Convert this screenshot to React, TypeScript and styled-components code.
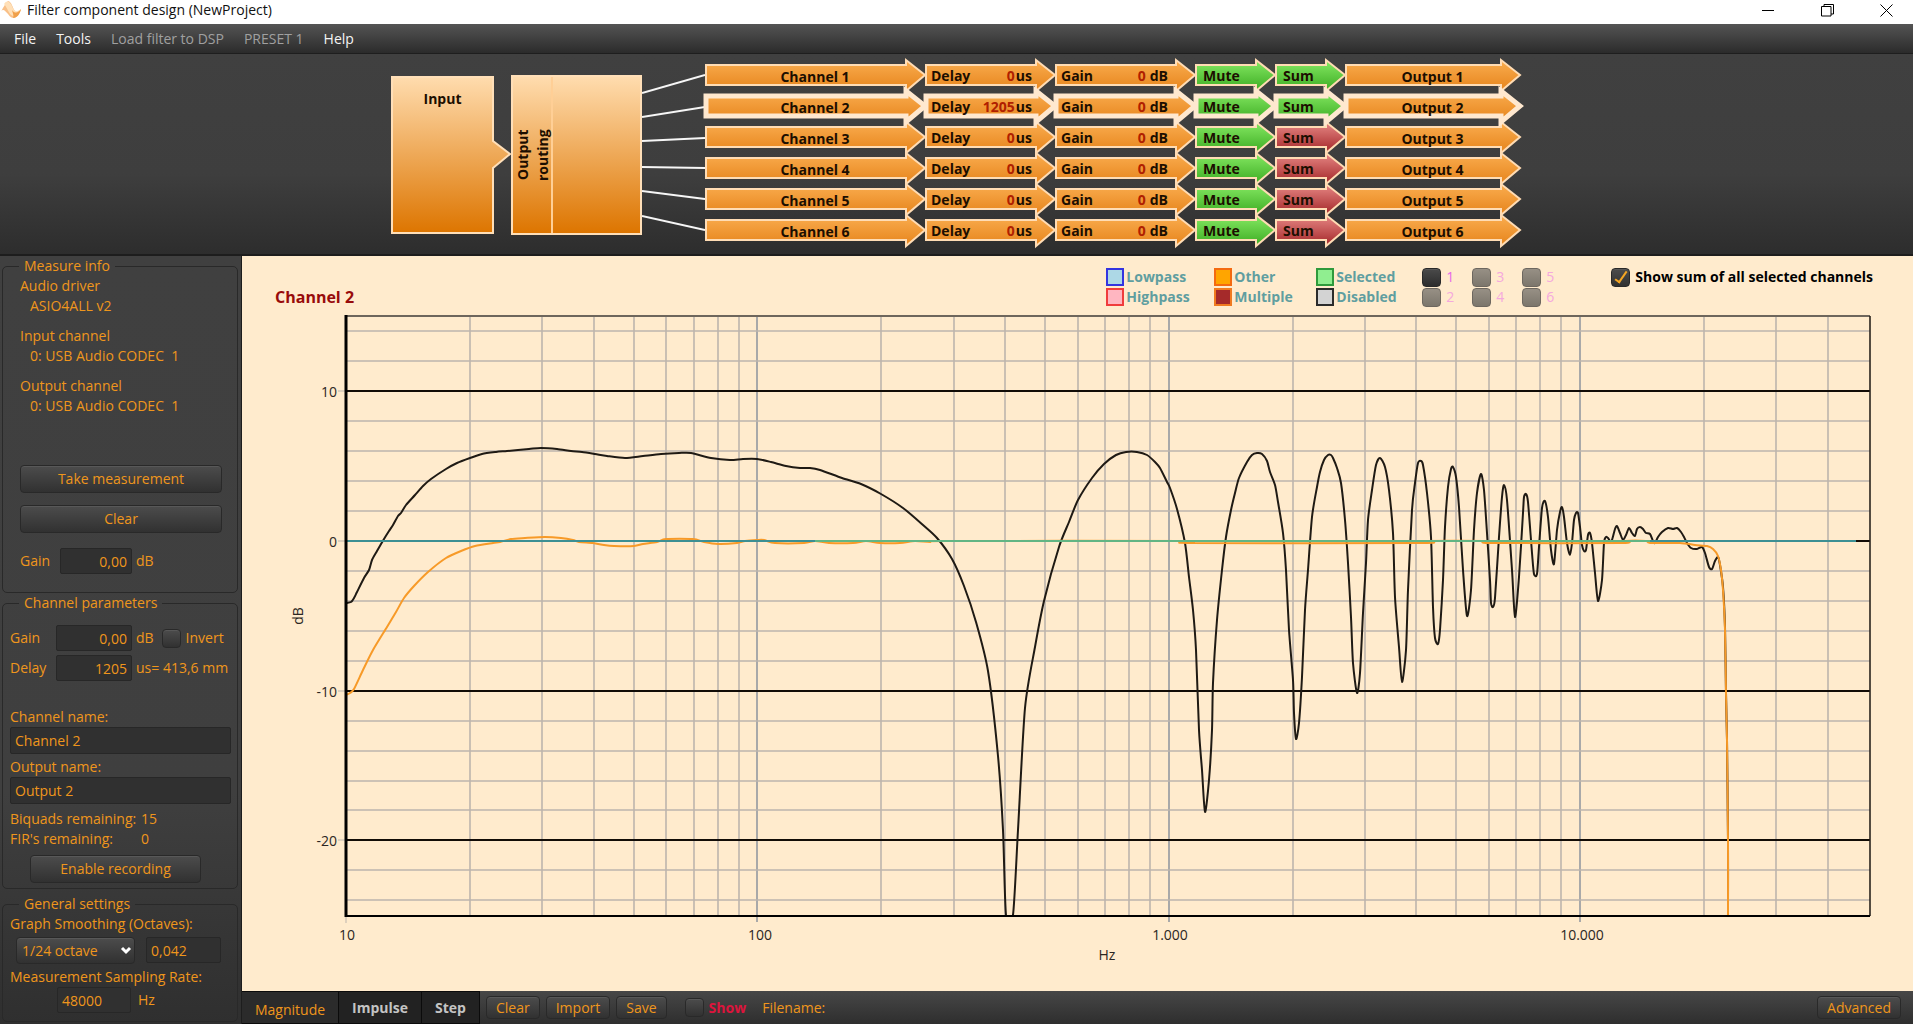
import React from "react";
import styled, { createGlobalStyle, css } from "styled-components";

const FONT = '"Open Sans", "Noto Sans", sans-serif';
const ORANGE = "#ef961c";
const CREAM = "#ffebcd";

const GlobalStyle = createGlobalStyle`
  *, *::before, *::after { box-sizing: border-box; }
  body { margin: 0; background: #3c3c3c; font: 14px/20px ${FONT}; }
  button, input, select { font: inherit; color: inherit; margin: 0; }
`;

const Window = styled.div`
  display: flex;
  flex-direction: column;
  min-height: 100vh;
  color: ${ORANGE};
`;

/* ---------- title bar and menu ---------- */

const TitleBar = styled.header`
  display: flex;
  align-items: center;
  height: 24px;
  padding: 0 18px 4px 0;
  background: #fff;
  color: #111;
`;

const Title = styled.h1`
  flex: 1;
  margin: 0 0 0 4px;
  font-size: 14px;
  line-height: 20px;
  font-weight: 400;
`;

const WindowButton = styled.button`
  display: grid;
  place-items: center;
  width: 18px;
  height: 20px;
  margin-left: 41px;
  padding: 0;
  border: 0;
  background: none;
  color: #000;
`;

const MenuBar = styled.nav`
  display: flex;
  align-items: center;
  gap: 20px;
  height: 30px;
  padding: 0 14px;
  background: linear-gradient(#545454, #2b2b2b);
  border-bottom: 1px solid #1e1e1e;
`;

const MenuButton = styled.button`
  padding: 0;
  border: 0;
  background: none;
  color: #f4f4f4;
  &:disabled { color: #a0a0a0; }
`;

/* ---------- routing diagram ---------- */

const Routing = styled.section`
  display: flex;
  justify-content: center;
  height: 202px;
  padding: 6px 2px 0 0;
  background: linear-gradient(#404040 0%, #3e3e3e 60%, #2d2d2d 100%);
  border-bottom: 2px solid #1d1d1d;
  color: #1c0e00;
  font-weight: 700;
`;

const InputBlock = styled.div`
  position: relative;
  width: 120px;
  height: 160px;
  margin-top: 15px;
  padding: 14px 17px 0 0;
  text-align: center;
`;

const RoutingBlock = styled.div`
  display: flex;
  width: 131px;
  height: 160px;
  margin-top: 15px;
  border: 2px solid #ffdfb8;
  background: linear-gradient(#ffdcae, #dd7500);
`;

const RoutingNameCell = styled.div`
  display: flex;
  width: 40px;
  border-right: 2px solid #ffcf96;
`;

const RoutingName = styled.div`
  display: flex;
  flex: 1;
  align-items: center;
  justify-content: center;
  writing-mode: vertical-rl;
  transform: rotate(180deg);
  text-align: center;
`;

const Wires = styled.svg`
  width: 63px;
  height: 188px;
`;

const ChannelRows = styled.div`
  display: flex;
  flex-direction: column;
`;

const ChannelRow = styled.div<{ $selected: boolean }>`
  position: relative;
  display: flex;
  z-index: ${(p) => (p.$selected ? 1 : 0)};
`;

const ArrowButton = styled.button<{ $width: number; $center?: boolean; $left: number; $right: number }>`
  position: relative;
  display: flex;
  align-items: center;
  justify-content: ${(p) => (p.$center ? "center" : "flex-start")};
  width: ${(p) => p.$width}px;
  height: 31px;
  padding: ${(p) => (p.$center ? "2px 0 0" : `0 ${p.$right}px 0 ${p.$left}px`)};
  border: 0;
  background: none;
  line-height: 20px;
`;

const ArrowShape = styled.svg`
  position: absolute;
  inset: 0;
  width: 100%;
  height: 100%;
  overflow: visible;
`;

const ArrowText = styled.span`
  position: relative;
`;

const ArrowValue = styled(ArrowText)<{ $gap: number }>`
  margin-left: auto;
  padding-right: ${(p) => p.$gap}px;
  color: #b02000;
`;

const FILLS = {
  orange: ["#f7a748", "#e98a23"],
  green: ["#7be05a", "#47b52c"],
  red: ["#dd7a78", "#ad3436"],
};
type Fill = keyof typeof FILLS;

function Arrow(props: {
  width: number;
  fill?: Fill;
  selected: boolean;
  center?: boolean;
  left?: number;
  right?: number;
  children: React.ReactNode;
}) {
  const { width: w, fill = "orange", selected, center, left = 6, right = 20, children } = props;
  const h = w - 19;
  const points = `1,5 ${h},5 ${h},0 ${w},15 ${h},31 ${h},25 1,25`;
  return (
    <ArrowButton type="button" $width={w} $center={center} $left={left} $right={right}>
      <ArrowShape aria-hidden="true">
        <polygon
          points={points}
          fill={`url(#fill-${fill})`}
          stroke={selected ? "#ffe8cf" : "#ffdcb4"}
          strokeWidth={selected ? 5 : 2}
        />
      </ArrowShape>
      {children}
    </ArrowButton>
  );
}

/* ---------- work area ---------- */

const Body = styled.div`
  display: grid;
  grid-template-columns: 242px 1fr;
  flex: 1;
`;

const Sidebar = styled.aside`
  display: flex;
  flex-direction: column;
  padding: 0 3px 2px 2px;
  border-right: 1px solid #1d1d1d;
  background: linear-gradient(#404040 0%, #3f3f3f 70%, #2f2f2f 100%);
`;

const Group = styled.fieldset<{ $inset: number; $bottom: number; $gap?: number }>`
  min-width: 0;
  margin: ${(p) => p.$gap ?? 0}px 0 0;
  padding: 0 6px ${(p) => p.$bottom}px ${(p) => p.$inset}px;
  border: 1px solid #292929;
  border-radius: 5px;
`;

const Legend = styled.legend<{ $inset: number }>`
  margin-left: ${(p) => 16 - p.$inset}px;
  padding: 0 5px;
`;

const Info = styled.dl`
  margin: 0 0 49px;
  dd { margin: 0 0 10px; padding-left: 10px; white-space: pre; }
`;

const glossy = css`
  border: 1px solid #292929;
  border-radius: 4px;
  background: linear-gradient(#4c4c4c, #313131);
  box-shadow: inset 0 1px 0 #585858;
`;

const PanelButton = styled.button<{ $width: number; $left?: number }>`
  ${glossy}
  display: block;
  width: ${(p) => p.$width}px;
  height: 28px;
  margin-left: ${(p) => p.$left ?? 0}px;
  padding: 0;
  & + & { margin-top: 12px; }
`;

const field = css`
  height: 26px;
  padding: 0 4px;
  border: 1px solid #272727;
  border-radius: 2px;
  background: #303030;
  outline: 0;
`;

const ValueRow = styled.div<{ $label: number; $top: number }>`
  display: flex;
  align-items: center;
  gap: 4px;
  margin-top: ${(p) => p.$top}px;
  > label:first-child { width: ${(p) => p.$label}px; }
`;

const ValueInput = styled.input<{ $width: number; $left?: boolean }>`
  ${field}
  width: ${(p) => p.$width}px;
  text-align: ${(p) => (p.$left ? "left" : "right")};
`;

const CheckLabel = styled.label<{ $color?: string; $bold?: boolean }>`
  display: flex;
  align-items: center;
  gap: 5px;
  color: ${(p) => p.$color ?? "inherit"};
  font-weight: ${(p) => (p.$bold ? 700 : 400)};
  white-space: nowrap;
`;

const InvertCheck = styled.div`
  padding-left: 4px;
`;

const Tick = styled.input.attrs({ type: "checkbox" })`
  ${glossy}
  appearance: none;
  display: grid;
  place-items: center;
  width: 19px;
  height: 19px;
  &:checked::after {
    content: "";
    width: 6px;
    height: 14px;
    margin-bottom: 3px;
    border: solid #f5a623;
    border-width: 0 2px 2px 0;
    transform: rotate(35deg);
  }
`;

const ChannelTick = styled(Tick)`
  background: linear-gradient(#4a4a4a, #2d2d2d);
  &:disabled {
    border-color: #6d675f;
    background: linear-gradient(#979085, #7c766c);
    box-shadow: none;
  }
`;

const Names = styled.div`
  display: flex;
  flex-direction: column;
  margin: 26px 0 2px;
`;

const NameInput = styled.input`
  ${field}
  height: 27px;
  margin-bottom: 3px;
`;

const Remaining = styled.dl`
  display: grid;
  grid-template-columns: 131px auto;
  margin: 0 0 6px;
  dd { margin: 0; }
`;

const SmoothingRow = styled.div`
  display: flex;
  gap: 11px;
  margin: 3px 0 3px 6px;
`;

const SelectBox = styled.div`
  position: relative;
  svg { position: absolute; right: 3px; top: 9px; pointer-events: none; }
`;

const Select = styled.select`
  ${glossy}
  appearance: none;
  width: 119px;
  height: 27px;
  padding: 0 5px;
`;

const RateRow = styled.div`
  display: flex;
  align-items: center;
  gap: 7px;
  padding-left: 47px;
`;

/* ---------- chart ---------- */

const ChartPane = styled.main`
  display: flex;
  flex-direction: column;
  min-width: 0;
  background: ${CREAM};
`;

const ChartHead = styled.div`
  display: flex;
  align-items: flex-start;
  height: 52px;
  padding: 11px 40px 0 33px;
`;

const ChartTitle = styled.h2`
  margin: 19px auto 0 0;
  color: #980b0b;
  font-size: 16px;
  line-height: 22px;
  font-weight: 700;
`;

const Key = styled.div`
  display: grid;
  grid-template: 20px 20px / 108px 102px 106px 50px 50px 89px auto;
  grid-auto-flow: column;
  align-items: center;
  color: #5f9ea0;
  font-weight: 700;
`;

const KeyItem = styled.div`
  display: flex;
  align-items: center;
  gap: 2px;
`;

const Swatch = styled.span<{ $fill: string; $edge: string }>`
  width: 18px;
  height: 18px;
  border: 2px solid ${(p) => p.$edge};
  background: ${(p) => p.$fill};
`;

const Plot = styled.svg`
  display: block;
  width: 100%;
  height: auto;
  flex: 1;
  font: 14px ${FONT};
`;

const Footer = styled.div`
  display: flex;
  align-items: center;
  gap: 6px;
  height: 33px;
  padding-right: 12px;
  background: linear-gradient(#474747, #2e2e2e);
`;

const Tabs = styled.div`
  display: flex;
  align-self: stretch;
`;

const Tab = styled.button<{ $active?: boolean }>`
  padding: ${(p) => (p.$active ? 4 : 1)}px 13px 0;
  border: 1px solid #0b0b0b;
  border-left-width: 0;
  background: ${(p) => (p.$active ? "#2b2b2b" : "#222")};
  color: ${(p) => (p.$active ? ORANGE : "#c4c4c4")};
  font-weight: ${(p) => (p.$active ? 400 : 700)};
`;

const BarButton = styled.button`
  ${glossy}
  height: 23px;
  padding: 0 9px;
`;

const BarCheck = styled.div`
  margin: 0 10px 0 12px;
`;

const Spacer = styled.div`
  flex: 1;
`;

const LEFT = 346;
const RIGHT = 1870;
const TOP = 316;
const BOTTOM = 915;
const DECADE = 411.4;
const ZERO = 541;
const xOf = (hz: number) => LEFT + Math.log10(hz / 10) * DECADE;
const yOf = (db: number) => Math.round(ZERO - db * 14.97);

const SUM_CURVE =
  "346,603 351,602 354,598 357,592 364,578 369,570 372,560 377,551 384,539 389,531 393,525 398,516 401,513 406,505 415,495 423,486 431,479 446,469 457,463 470,458 482,454 496,452 507,451 529,449 541,448 557,449 571,451 582,452 595,454 607,456 625,458 643,456 661,454 679,453 691,453 711,458 730,460 743,459 757,459 771,462 786,466 800,468 810,468 820,470 842,478 861,484 881,494 903,508 923,525 937,538 952,559 964,586 976,622 988,671 998,756 1003,830 1006,915 1013,915 1018,830 1025,708 1035,647 1044,601 1059,547 1069,522 1078,500 1092,478 1104,464 1116,455 1126,452 1137,452 1147,455 1155,462 1160,468 1167,482 1170,488 1177,509 1185,543 1189,577 1193,610 1196,650 1199,730 1202,770 1205,812 1209,780 1212,730 1213,683 1217,620 1222,570 1226,537 1231,510 1235,493 1239,478 1247,462 1252,455 1257,453 1262,454 1267,461 1270,472 1275,485 1278,502 1283,533 1286,570 1289,630 1293,680 1294,713 1296,739 1299,723 1302,677 1305,610 1308,570 1312,517 1317,487 1320,472 1324,460 1328,455 1331,455 1333,458 1337,468 1341,483 1345,520 1348,563 1351,617 1353,663 1357,693 1360,673 1363,613 1366,563 1368,520 1372,490 1376,465 1380,458 1385,467 1389,490 1393,533 1395,597 1399,647 1402,682 1406,650 1408,590 1412,510 1415,483 1418,463 1421,461 1423,465 1427,493 1431,537 1433,607 1435,638 1438,644 1440,630 1443,580 1445,527 1448,487 1451,469 1453,467 1456,477 1459,507 1463,570 1467,616 1471,590 1474,530 1477,493 1481,474 1484,490 1487,533 1490,580 1491,603 1493,607 1495,598 1499,537 1502,497 1504,485 1507,500 1512,570 1515,617 1519,577 1523,513 1524,497 1526,494 1528,502 1532,553 1534,574 1537,574 1539,547 1542,508 1545,501 1548,517 1551,550 1554,564 1557,530 1560,512 1562,507 1564,517 1567,543 1570,555 1572,543 1574,520 1576,513 1578,513 1580,527 1582,545 1584,551 1586,550 1588,535 1590,533 1592,543 1595,573 1598,601 1602,580 1604,543 1606,537 1608,538 1610,541 1612,540 1615,529 1617,526 1620,533 1623,540 1626,535 1629,528 1632,533 1635,536 1637,529 1640,527 1643,529 1646,533 1650,534 1653,541 1655,543 1658,537 1662,532 1668,528 1673,529 1677,528 1681,532 1684,537 1687,543 1691,548 1697,549 1702,547 1705,553 1709,567 1712,569 1715,561 1718,557 1720,565 1723,587 1725,627 1726,693 1727,740 1728,840 1728,915";

const CHANNEL_CURVE =
  "346,695 350,693 354,689 363,670 373,650 387,627 396,612 404,598 414,586 428,572 446,558 461,551 475,546 493,543 500,542 511,539 525,538 545,537 561,538 573,540 579,542 593,543 604,545 614,546 634,546 643,544 657,542 666,539 693,539 704,542 718,544 737,543 745,541 757,540 764,540 775,543 804,543 815,541 829,543 853,543 866,541 880,543 900,543 915,541 930,542 945,541 1185,541 1188,543 1422,543 1425,541 1486,541 1489,543 1622,543 1625,541 1646,541 1650,543 1680,543 1695,545 1707,546 1713,549 1718,556 1721,570 1723,590 1725,630 1726,693 1727,740 1728,840 1728,915";

/* Joins the samples of a response with a smooth curve that passes through each. */
function smoothPath(samples: string) {
  const p = samples.split(" ").map((s) => s.split(",").map(Number));
  const at = (i: number) => p[Math.max(0, Math.min(p.length - 1, i))];
  let d = `M${p[0]}`;
  for (let i = 0; i < p.length - 1; i++) {
    const [a, b, c, e] = [at(i - 1), at(i), at(i + 1), at(i + 2)];
    const c1 = [b[0] + (c[0] - a[0]) / 8, b[1] + (c[1] - a[1]) / 8];
    const c2 = [c[0] - (e[0] - b[0]) / 8, c[1] - (e[1] - b[1]) / 8];
    d += `C${c1} ${c2} ${c}`;
  }
  return d;
}

const MULTIPLES = [1, 2, 3, 4, 5, 6, 7, 8, 9];
const VERTICALS = [10, 100, 1000, 10000]
  .flatMap((d) => MULTIPLES.map((m) => d * m))
  .filter((hz) => hz > 10 && hz < 50000);
const HORIZONTALS = Array.from({ length: 20 }, (_, i) => 14 - i * 2);

function MagnitudePlot() {
  return (
    <Plot viewBox="242 308 1671 683" role="img" aria-label="Magnitude response">
      <clipPath id="plot-area">
        <rect x={LEFT} y={TOP} width={RIGHT - LEFT} height={BOTTOM - TOP} />
      </clipPath>
      {VERTICALS.map((hz) => {
        const major = [100, 1000, 10000].includes(hz);
        return (
          <line
            key={hz}
            x1={Math.round(xOf(hz))}
            x2={Math.round(xOf(hz))}
            y1={TOP}
            y2={major ? BOTTOM + 7 : BOTTOM}
            stroke={major ? "#a9a9a9" : "#bdb5ad"}
            strokeWidth={major ? 2 : 1.6}
          />
        );
      })}
      {HORIZONTALS.map((db) => (
        <line key={db} x1={LEFT} x2={RIGHT} y1={yOf(db)} y2={yOf(db)} stroke="#bdb5ad" strokeWidth={1.6} />
      ))}
      {[10, 0, -10, -20].map((db) => (
        <line key={db} x1={LEFT} x2={RIGHT} y1={yOf(db)} y2={yOf(db)} stroke="#120c06" strokeWidth={2} />
      ))}
      {[10, 0, -10, -20].map((db) => (
        <line key={db} x1={LEFT - 8} x2={LEFT} y1={yOf(db)} y2={yOf(db)} stroke="#bdb5ad" />
      ))}
      <line x1={LEFT} x2={RIGHT} y1={TOP} y2={TOP} stroke="#6e665c" strokeWidth={2} />
      <line x1={RIGHT} x2={RIGHT} y1={TOP} y2={BOTTOM + 1} stroke="#2a241d" strokeWidth={1.6} />
      <g clipPath="url(#plot-area)" fill="none" strokeWidth={2} strokeLinejoin="round">
        <path d={smoothPath(SUM_CURVE)} stroke="#1f1a14" />
        <path d={smoothPath(CHANNEL_CURVE)} stroke="#f79a28" />
      </g>
      <line x1={LEFT} x2={1856} y1={ZERO} y2={ZERO} stroke="#3c8f93" strokeWidth={2} />
      <line x1={815} x2={1650} y1={ZERO} y2={ZERO} stroke="#62b584" strokeWidth={2} />
      <line x1={LEFT} x2={RIGHT} y1={BOTTOM + 1} y2={BOTTOM + 1} stroke="#000" strokeWidth={2} />
      <line x1={LEFT} x2={LEFT} y1={TOP - 1} y2={BOTTOM + 2} stroke="#000" strokeWidth={3} />
      <line x1={LEFT} x2={LEFT} y1={BOTTOM + 2} y2={BOTTOM + 8} stroke="#bdb5ad" />
      <g fill="#2b2622">
        {[10, 0, -10, -20].map((db) => (
          <text key={db} x={337} y={yOf(db) + 6} textAnchor="end">{db}</text>
        ))}
        <text x={347} y={940} textAnchor="middle">10</text>
        <text x={760} y={940} textAnchor="middle">100</text>
        <text x={1170} y={940} textAnchor="middle">1.000</text>
        <text x={1582} y={940} textAnchor="middle">10.000</text>
        <text x={1107} y={960} textAnchor="middle">Hz</text>
        <text transform="translate(303 616) rotate(-90)" textAnchor="middle">dB</text>
      </g>
    </Plot>
  );
}

const CHANNELS = [
  { n: 1, delay: 0, sum: true },
  { n: 2, delay: 1205, sum: true },
  { n: 3, delay: 0, sum: false },
  { n: 4, delay: 0, sum: false },
  { n: 5, delay: 0, sum: false },
  { n: 6, delay: 0, sum: false },
];
const WIRE_Y = [
  [33, 15],
  [57, 47],
  [81, 78],
  [107, 108],
  [131, 139],
  [156, 170],
];

const KEY_ITEMS = [
  ["Lowpass", "#add8e6", "#3434e0"],
  ["Highpass", "#ffb6c1", "#f03c3c"],
  ["Other", "#ffa500", "#f46a10"],
  ["Multiple", "#a52a2a", "#f07a20"],
  ["Selected", "#90ee90", "#2f9a3c"],
  ["Disabled", "#d3d3d3", "#2b2b2b"],
];

export default function App() {
  return (
    <Window>
      <GlobalStyle />
      <TitleBar>
        <svg width="23" height="18" viewBox="0 0 23 18" aria-hidden="true">
          <path d="M1 11C3 7 5 10 8 13c2 3 4 4 6 4 4-1 6-5 7-9-2 3-4 4-6 2C12 6 12 1 8 0 6 2 3 6 1 11z" fill="#f9c088" />
          <path d="M4 3c3-5 6-2 8 2 2 5 4 7 9 3-2 5-5 8-8 7C9 14 7 6 4 3z" fill="#ffe0b8" />
          <path d="M12 9c1 4 2 6 1 8 4 0 7-4 8-9-3 4-6 5-9 1z" fill="#f0a04a" />
        </svg>
        <Title>Filter component design (NewProject)</Title>
        <WindowButton type="button" aria-label="Minimize">
          <svg width="12" height="12"><path d="M0 6.5h12" stroke="currentColor" /></svg>
        </WindowButton>
        <WindowButton type="button" aria-label="Restore">
          <svg width="13" height="13" fill="none" stroke="currentColor">
            <path d="M.5 2.500h9.500v9.500h-9.500zM3 2V.5h9.500V10H10" />
          </svg>
        </WindowButton>
        <WindowButton type="button" aria-label="Close">
          <svg width="13" height="13"><path d="M.5.5l12 12M12.500.5l-12 12" stroke="currentColor" /></svg>
        </WindowButton>
      </TitleBar>

      <MenuBar>
        <MenuButton type="button">File</MenuButton>
        <MenuButton type="button">Tools</MenuButton>
        <MenuButton type="button" disabled>Load filter to DSP</MenuButton>
        <MenuButton type="button" disabled>PRESET 1</MenuButton>
        <MenuButton type="button">Help</MenuButton>
      </MenuBar>

      <Routing>
        <svg width="0" height="0" aria-hidden="true">
          <defs>
            {(Object.keys(FILLS) as Fill[]).map((k) => (
              <linearGradient key={k} id={`fill-${k}`} x1="0" y1="0" x2="0" y2="1">
                <stop offset="0.15" stopColor={FILLS[k][0]} />
                <stop offset="0.85" stopColor={FILLS[k][1]} />
              </linearGradient>
            ))}
            <linearGradient id="fill-block" x1="0" y1="0" x2="0" y2="1">
              <stop offset="0" stopColor="#ffdcae" />
              <stop offset="1" stopColor="#dd7500" />
            </linearGradient>
          </defs>
        </svg>
        <InputBlock>
          <ArrowShape aria-hidden="true">
            <polygon
              points="1,2 102,2 102,66 119,79 102,93 102,158 1,158"
              fill="url(#fill-block)"
              stroke="#ffdfb8"
              strokeWidth={2}
            />
          </ArrowShape>
          <ArrowText>Input</ArrowText>
        </InputBlock>
        <RoutingBlock>
          <RoutingNameCell>
            <RoutingName>Output<br />routing</RoutingName>
          </RoutingNameCell>
        </RoutingBlock>
        <Wires aria-hidden="true">
          {WIRE_Y.map(([a, b]) => (
            <line key={a} x1={0} y1={a} x2={63} y2={b} stroke="#f6f6f6" strokeWidth={2} />
          ))}
        </Wires>
        <ChannelRows>
          {CHANNELS.map(({ n, delay, sum }) => {
            const selected = n === 2;
            return (
              <ChannelRow key={n} $selected={selected}>
                <Arrow width={220} selected={selected} center>
                  <ArrowText>Channel {n}</ArrowText>
                </Arrow>
                <Arrow width={130} right={23} selected={selected}>
                  <ArrowText>Delay</ArrowText>
                  <ArrowValue $gap={1}>{delay}</ArrowValue>
                  <ArrowText>us</ArrowText>
                </Arrow>
                <Arrow width={140} right={27} selected={selected}>
                  <ArrowText>Gain</ArrowText>
                  <ArrowValue $gap={4}>0</ArrowValue>
                  <ArrowText>dB</ArrowText>
                </Arrow>
                <Arrow width={80} left={8} fill="green" selected={selected}>
                  <ArrowText>Mute</ArrowText>
                </Arrow>
                <Arrow width={70} left={8} fill={sum ? "green" : "red"} selected={selected}>
                  <ArrowText>Sum</ArrowText>
                </Arrow>
                <Arrow width={175} selected={selected} center>
                  <ArrowText>Output {n}</ArrowText>
                </Arrow>
              </ChannelRow>
            );
          })}
        </ChannelRows>
      </Routing>

      <Body>
        <Sidebar>
          <Group $inset={17} $bottom={18}>
            <Legend $inset={17}>Measure info</Legend>
            <Info>
              <dt>Audio driver</dt>
              <dd>ASIO4ALL v2</dd>
              <dt>Input channel</dt>
              <dd>{"0: USB Audio CODEC  1"}</dd>
              <dt>Output channel</dt>
              <dd>{"0: USB Audio CODEC  1"}</dd>
            </Info>
            <PanelButton type="button" $width={202}>Take measurement</PanelButton>
            <PanelButton type="button" $width={202}>Clear</PanelButton>
            <ValueRow $label={36} $top={15}>
              <label htmlFor="m-gain">Gain</label>
              <ValueInput id="m-gain" $width={72} defaultValue="0,00" />
              <span>dB</span>
            </ValueRow>
          </Group>

          <Group $inset={7} $bottom={5}>
            <Legend $inset={7}>Channel parameters</Legend>
            <ValueRow $label={42} $top={12}>
              <label htmlFor="c-gain">Gain</label>
              <ValueInput id="c-gain" $width={76} defaultValue="0,00" />
              <span>dB</span>
              <InvertCheck>
                <CheckLabel>
                  <Tick /> Invert
                </CheckLabel>
              </InvertCheck>
            </ValueRow>
            <ValueRow $label={42} $top={4}>
              <label htmlFor="c-delay">Delay</label>
              <ValueInput id="c-delay" $width={76} defaultValue="1205" />
              <span>us= 413,6 mm</span>
            </ValueRow>
            <Names>
              <label htmlFor="c-name">Channel name:</label>
              <NameInput id="c-name" defaultValue="Channel 2" />
              <label htmlFor="o-name">Output name:</label>
              <NameInput id="o-name" defaultValue="Output 2" />
            </Names>
            <Remaining>
              <dt>Biquads remaining:</dt>
              <dd>15</dd>
              <dt>FIR's remaining:</dt>
              <dd>0</dd>
            </Remaining>
            <PanelButton type="button" $width={171} $left={20}>Enable recording</PanelButton>
          </Group>

          <Group $inset={7} $bottom={8} $gap={5}>
            <Legend $inset={7}>General settings</Legend>
            <label htmlFor="smooth">Graph Smoothing (Octaves):</label>
            <SmoothingRow>
              <SelectBox>
                <Select id="smooth" defaultValue="24">
                  <option value="24">1/24 octave</option>
                  <option value="12">1/12 octave</option>
                </Select>
                <svg width="12" height="9" aria-hidden="true">
                  <path d="M2 2l4 4 4-4" fill="none" stroke="#fff" strokeWidth="3" />
                </svg>
              </SelectBox>
              <ValueInput $width={75} $left aria-label="Smoothing value" defaultValue="0,042" />
            </SmoothingRow>
            <label htmlFor="rate">Measurement Sampling Rate:</label>
            <RateRow>
              <ValueInput id="rate" $width={74} $left defaultValue="48000" />
              <span>Hz</span>
            </RateRow>
          </Group>
        </Sidebar>

        <ChartPane>
          <ChartHead>
            <ChartTitle>Channel 2</ChartTitle>
            <Key>
              {KEY_ITEMS.map(([name, fill, edge]) => (
                <KeyItem key={name}>
                  <Swatch $fill={fill} $edge={edge} />
                  {name}
                </KeyItem>
              ))}
              {[1, 2, 3, 4, 5, 6].map((n) => (
                <CheckLabel key={n} $color={n === 1 ? "#e868ea" : "#f5a8de"}>
                  <ChannelTick disabled={n !== 1} /> {n}
                </CheckLabel>
              ))}
              <CheckLabel $color="#000" $bold>
                <Tick defaultChecked /> Show sum of all selected channels
              </CheckLabel>
            </Key>
          </ChartHead>
          <MagnitudePlot />
          <Footer>
            <Tabs>
              <Tab type="button" $active>Magnitude</Tab>
              <Tab type="button">Impulse</Tab>
              <Tab type="button">Step</Tab>
            </Tabs>
            <BarButton type="button">Clear</BarButton>
            <BarButton type="button">Import</BarButton>
            <BarButton type="button">Save</BarButton>
            <BarCheck>
              <CheckLabel $color="#dc143c" $bold>
                <Tick /> Show
              </CheckLabel>
            </BarCheck>
            <span>Filename:</span>
            <Spacer />
            <BarButton type="button">Advanced</BarButton>
          </Footer>
        </ChartPane>
      </Body>
    </Window>
  );
}
